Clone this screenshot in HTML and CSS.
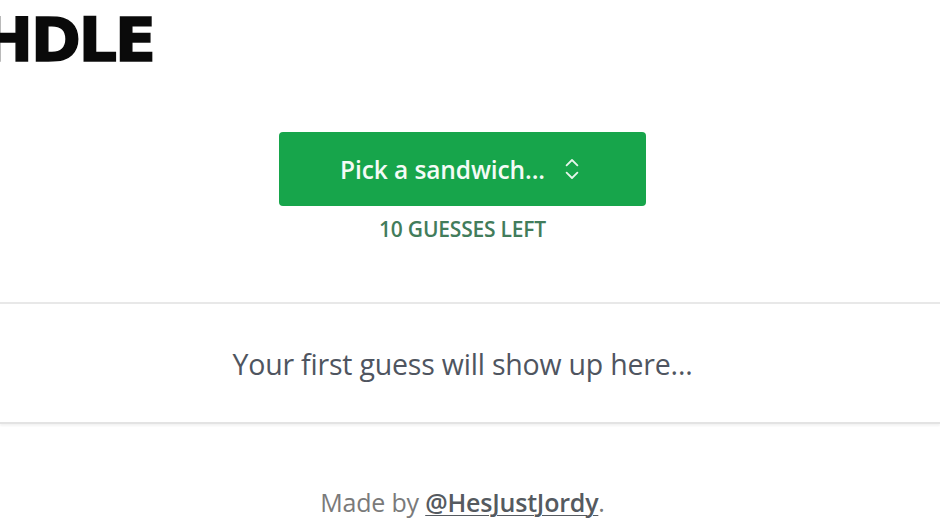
FILE: index.html
```html
<!DOCTYPE html>
<html lang="en">
<head>
<meta charset="utf-8">
<title>Sandwichdle</title>
<link rel="stylesheet" href="styles.css">
</head>
<body>
<div class="page">
  <header class="header">
    <h1 class="title">SANDWICHDLE</h1>
  </header>
  <section class="picker">
    <button class="pick-btn" type="button">
      <span class="pick-label">Pick a sandwich...</span>
      <svg class="selector" width="20" height="24" viewBox="0 0 20 24" fill="none" stroke="currentColor" stroke-width="2" stroke-linecap="round" stroke-linejoin="round"><path d="M4 8l6-6 6 6"/><path d="M4 16l6 6 6-6"/></svg>
    </button>
    <div class="guesses">10 GUESSES LEFT</div>
  </section>
  <section class="board">
    <p class="placeholder">Your first guess will show up here...</p>
  </section>
  <footer class="footer">Made by <a class="author" href="#">@HesJustJordy</a>.</footer>
</div>
</body>
</html>
```
FILE: styles.css
```css
html, body {
  margin: 0;
  padding: 0;
  background: #ffffff;
  overflow: hidden;
}
body {
  font-family: "Open Sans", "Noto Sans", sans-serif;
}
.page {
  width: 925px;
  display: flex;
  flex-direction: column;
  align-items: center;
}
.header {
  align-self: flex-start;
  width: 154px;
  height: 96px;
  display: flex;
  justify-content: flex-end;
  align-items: flex-start;
}
.title {
  margin: 0;
  padding-top: 4px;
  font-family: "DejaVu Sans", sans-serif;
  font-weight: 700;
  font-size: 60px;
  line-height: 72px;
  color: #0a0a0a;
  white-space: nowrap;
  letter-spacing: -2px;
  -webkit-text-stroke: 1.5px #0a0a0a;
}
.picker {
  margin-top: 36px;
  display: flex;
  flex-direction: column;
  align-items: center;
}
.pick-btn {
  width: 367px;
  height: 74px;
  border: none;
  border-radius: 4px;
  background: #17a54b;
  color: #f4fbf6;
  display: flex;
  align-items: center;
  justify-content: center;
  gap: 18px;
  font-family: "Open Sans", "Noto Sans", sans-serif;
  font-size: 24.5px;
  font-weight: 600;
  padding: 0 4px 0 0;
  cursor: pointer;
}
.pick-label {
  letter-spacing: -0.1px;
}
.selector {
  width: 18px;
  height: 22px;
  color: #e7f5ec;
}
.guesses {
  margin-top: 10px;
  font-size: 21px;
  line-height: 26px;
  font-weight: 600;
  color: #427c5b;
  letter-spacing: -0.2px;
}
.board {
  margin-top: 60px;
  width: 940px;
  align-self: flex-start;
  border-top: 2px solid #e8e8e8;
  border-bottom: 2px solid #e3e3e3;
  box-shadow: 0 2px 2px rgba(0,0,0,0.05);
  height: 118px;
  display: flex;
  align-items: center;
}
.placeholder {
  margin: 0;
  width: 925px;
  text-align: center;
  font-size: 28.5px;
  color: #4f5560;
  letter-spacing: -0.2px;
  padding-top: 2px;
}
.footer {
  margin-top: 61px;
  font-size: 25px;
  color: #7a7a7a;
  letter-spacing: -0.2px;
}
.author {
  color: #555a60;
  font-weight: 600;
  text-decoration: underline;
  text-decoration-thickness: 1px;
  text-underline-offset: 3px;
}
```
